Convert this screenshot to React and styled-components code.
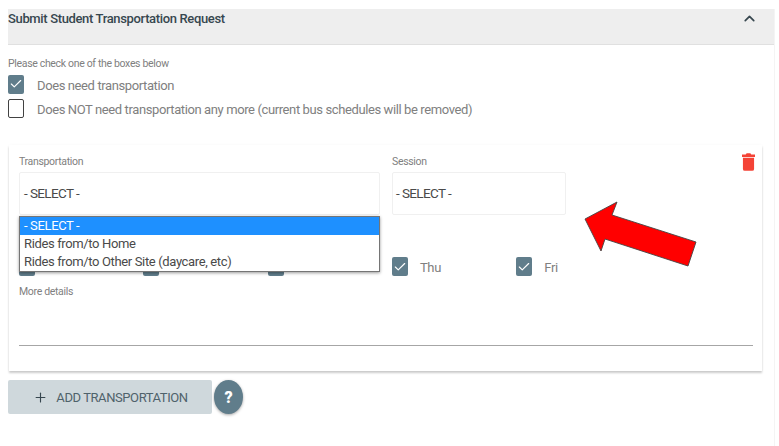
import React from "react";
import styled, { createGlobalStyle } from "styled-components";
import { ChevronUp, Check, Plus } from "lucide-react";

const GlobalStyle = createGlobalStyle`
  html, body {
    margin: 0;
    background: #fff;
    font-family: Roboto, "Liberation Sans", sans-serif;
    overflow: hidden;
  }
`;

// first three labels sit behind the open dropdown
const days = ["", "", "", "Thu", "Fri"];
const options = ["- SELECT -", "Rides from/to Home", "Rides from/to Other Site (daycare, etc)"];

const App = () => {
  return (
    <>
      <GlobalStyle />
      <Page>
        <Section>
          <Header>
            <Title>Submit Student Transportation Request</Title>
            <ChevronUp size={17} strokeWidth={2.4} color="#37474f" />
          </Header>
          <Hint>Please check one of the boxes below</Hint>
          <CheckRow>
            <Box $checked>
              <Check size={14} strokeWidth={2} color="#fff" />
            </Box>
            <CheckText>Does need transportation</CheckText>
          </CheckRow>
          <CheckRow>
            <Box />
            <CheckText>
              Does NOT need transportation any more (current bus schedules will be removed)
            </CheckText>
          </CheckRow>

          <Card>
            <DeleteIcon>
              <svg width="13" height="18" viewBox="0 0 14 19">
                <path d="M5 0h4l1 1.5h4V4H0V1.500h4z M1 5h12v12a2 2 0 0 1-2 2H3a2 2 0 0 1-2-2z" fill="#f44336" />
              </svg>
            </DeleteIcon>
            <Fields>
              <Field $width="361px">
                <FieldLabel>Transportation</FieldLabel>
                <SelectBox>- SELECT -</SelectBox>
                <Dropdown>
                  {options.map((o, i) => (
                    <Option key={o} $active={i === 0}>{o}</Option>
                  ))}
                </Dropdown>
              </Field>
              <Field $width="174px">
                <FieldLabel>Session</FieldLabel>
                <SelectBox $small>- SELECT -</SelectBox>
              </Field>
            </Fields>
            <Days>
              {days.map((d, i) => (
                <Day key={i}>
                  <Box $checked>
                    <Check size={14} strokeWidth={2} color="#fff" />
                  </Box>
                  {d && <DayText>{d}</DayText>}
                </Day>
              ))}
            </Days>
            <FieldLabel>More details</FieldLabel>
            <Details />
          </Card>

          <Actions>
            <AddButton>
              <Plus size={15} strokeWidth={1.8} color="#37474f" />
              ADD TRANSPORTATION
            </AddButton>
            <HelpButton>?</HelpButton>
          </Actions>
        </Section>

        <Arrow width="113" height="66" viewBox="0 0 113 66">
          <path
            d="M1 18 L33 1 L28 14 L112 41 L104 65 L21 38 L17 50 Z"
            fill="#ff0000"
            stroke="#444"
            strokeWidth="0.9"
          />
        </Arrow>
      </Page>
    </>
  );
};

const Page = styled.div`
  position: relative;
  width: 779px;
  height: 446px;
  padding: 9px 4px 0 8px;
  box-sizing: border-box;
  overflow: hidden;
`;

const Section = styled.div`
  height: 100%;
  border-right: 1px solid #f4f4f4;
`;

const Header = styled.div`
  height: 36px;
  box-sizing: border-box;
  padding: 1px 16px 0 0;
  background: #eeeeee;
  border-bottom: 1px solid #e0e0e0;
  display: flex;
  justify-content: space-between;
  align-items: flex-start;
`;

const Title = styled.div`
  font-size: 13px;
  line-height: 17px;
  font-weight: 500;
  letter-spacing: -0.35px;
  color: #37474f;
`;

const Hint = styled.div`
  margin-top: 12px;
  margin-bottom: 2px;
  font-size: 10.5px;
  line-height: 13px;
  letter-spacing: -0.33px;
  color: #808080;
`;

const CheckRow = styled.div`
  display: flex;
  align-items: center;
  height: 24px;
`;

const Box = styled.span`
  width: 16px;
  height: 19px;
  flex: none;
  box-sizing: border-box;
  border-radius: 2px;
  display: flex;
  align-items: center;
  justify-content: center;
  background: ${(p) => (p.$checked ? "#607d8b" : "#fff")};
  border: ${(p) => (p.$checked ? "none" : "1.5px solid #424242")};
`;

const CheckText = styled.span`
  margin-left: 13px;
  padding-top: 3px;
  font-size: 13px;
  letter-spacing: -0.39px;
  color: #808080;
  white-space: nowrap;
`;

const Card = styled.div`
  position: relative;
  margin-top: 25px;
  margin-left: 1px;
  width: 753px;
  height: 226px;
  box-sizing: border-box;
  padding: 10px 10px 0;
  background: #fff;
  box-shadow: 0 2px 2px rgba(0, 0, 0, 0.2), 0 0 3px rgba(0, 0, 0, 0.03);
`;

const DeleteIcon = styled.div`
  position: absolute;
  top: 8px;
  right: 7px;
`;

const Fields = styled.div`
  display: flex;
  gap: 12px;
`;

const Field = styled.div`
  position: relative;
  width: ${(p) => p.$width};
`;

const FieldLabel = styled.div`
  font-size: 10.5px;
  line-height: 13px;
  letter-spacing: -0.33px;
  color: #808080;
`;

const SelectBox = styled.div`
  margin-top: 4px;
  height: 43px;
  box-sizing: border-box;
  padding: 0 0 1px ${(p) => (p.$small ? "3px" : "4px")};
  display: flex;
  align-items: center;
  font-size: 13.5px;
  letter-spacing: -0.6px;
  color: #4a4a4a;
  border: 1px solid #f0f0f0;
  border-radius: 2px;
`;

const Dropdown = styled.div`
  position: absolute;
  z-index: 2;
  top: 61px;
  left: 0;
  width: 100%;
  box-sizing: border-box;
  background: #fff;
  border: 1px solid #757575;
  box-shadow: 0 1px 3px rgba(0, 0, 0, 0.4);
`;

const Option = styled.div`
  height: 18px;
  line-height: 18px;
  padding-left: 4px;
  font-size: 13px;
  letter-spacing: -0.36px;
  white-space: nowrap;
  color: ${(p) => (p.$active ? "#fff" : "#4a4a4a")};
  background: ${(p) => (p.$active ? "#1e90ff" : "#fff")};
`;

const Days = styled.div`
  display: flex;
  margin-top: 42px;
  height: 19px;
  margin-bottom: 9px;
`;

const Day = styled.div`
  width: 124.3px;
  display: flex;
  align-items: center;
`;

const DayText = styled.span`
  margin-left: 12px;
  padding-top: 2px;
  font-size: 13px;
  letter-spacing: -0.3px;
  color: #808080;
`;

const Details = styled.div`
  margin-top: 47px;
  width: 734px;
  border-bottom: 1px solid #a6a6a6;
`;

const Actions = styled.div`
  display: flex;
  align-items: center;
  gap: 2px;
  margin-top: 9px;
`;

const AddButton = styled.div`
  width: 204px;
  height: 34px;
  padding-left: 1px;
  box-sizing: border-box;
  display: flex;
  align-items: center;
  justify-content: center;
  gap: 8px;
  background: #cfd8dc;
  border-radius: 2px;
  font-size: 13px;
  letter-spacing: -0.42px;
  color: #4f626b;
`;

const HelpButton = styled.div`
  width: 29px;
  height: 34px;
  border-radius: 50%;
  background: #607d8b;
  color: #fff;
  font-weight: 900;
  font-size: 16px;
  display: flex;
  align-items: center;
  justify-content: center;
  box-shadow: 0 1px 3px rgba(0, 0, 0, 0.35);
`;

const Arrow = styled.svg`
  position: absolute;
  left: 584px;
  top: 201px;
`;

export default App;
